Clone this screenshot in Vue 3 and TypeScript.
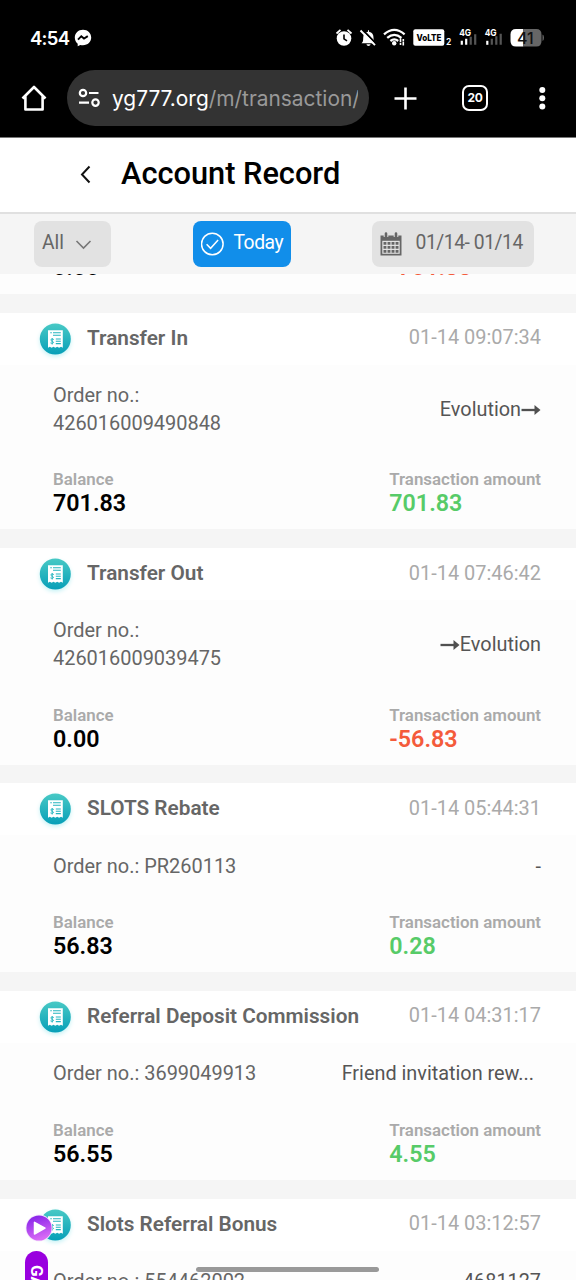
<script setup lang="ts">
interface AccountRecord {
  title: string
  time: string
  order: string
  wrap?: boolean
  detail: string
  arrow?: 'before' | 'after'
  clipped?: boolean
  balance: string
  amount: string
}

const records: AccountRecord[] = [
  { title: 'Transfer In', time: '01-14 09:07:34', order: '426016009490848', wrap: true, detail: 'Evolution', arrow: 'after', balance: '701.83', amount: '701.83' },
  { title: 'Transfer Out', time: '01-14 07:46:42', order: '426016009039475', wrap: true, detail: 'Evolution', arrow: 'before', balance: '0.00', amount: '-56.83' },
  { title: 'SLOTS Rebate', time: '01-14 05:44:31', order: 'PR260113', detail: '-', balance: '56.83', amount: '0.28' },
  { title: 'Referral Deposit Commission', time: '01-14 04:31:17', order: '3699049913', detail: 'Friend invitation rew...', clipped: true, balance: '56.55', amount: '4.55' },
  { title: 'Slots Referral Bonus', time: '01-14 03:12:57', order: '554462002', detail: '4681127', balance: '52.00', amount: '1.20' },
]
</script>

<template>
  <div class="screen">
    <header class="chrome">
      <div class="status">
        <span class="clock">4:54</span>
        <svg class="messenger" width="18" height="18" viewBox="0 0 18 18">
          <path d="M9 .8C4.200.8.8 4.200.8 8.600c0 2.500 1.100 4.700 2.900 6.100v2.500l2.600-1.200c.9.200 1.700.3 2.700.3 4.800 0 8.200-3.300 8.200-7.700S13.800.8 9 .8Z" fill="#fff" />
          <path d="m4 10.600 3.300-3.400 2.700 2.300 3.800-2.400" fill="none" stroke="#000" stroke-width="1.900" />
        </svg>
        <svg class="st-icons" width="210" height="24" viewBox="334 26 210 24">
          <!-- alarm -->
          <circle cx="344" cy="38.500" r="7.300" fill="#fff" />
          <path d="M336.500 33.500l4-3.600M351.500 33.500l-4-3.600" stroke="#fff" stroke-width="1.800" />
          <path d="M344 34.500v4.300l3 2" fill="none" stroke="#000" stroke-width="1.600" />
          <!-- muted bell -->
          <path d="M361.500 43.300c1.500-1.200 1.700-2.600 1.700-5.300 0-4 1.700-6 4.800-6.300v-1.500h1v1.500c3.200.4 4.500 2.700 4.500 6 0 2.800.3 4 2 5.600Z M366.500 44.300h4c-.2 2.200-3.800 2.200-4 0Z" fill="#fff" />
          <path d="m362.300 29.500 15 15.500" stroke="#000" stroke-width="1.800" />
          <path d="m360.500 30.500 14.500 14.700" stroke="#fff" stroke-width="1.900" />
          <!-- wifi -->
          <g fill="none" stroke="#fff" stroke-width="2.300">
            <path d="M384 34.300q10.300-8.800 20.600 0" />
            <path d="M387.200 37.900q7.100-6 14.200 0" />
            <path d="M390.400 41q3.900-3.200 7.800 0" />
          </g>
          <circle cx="394.200" cy="43.300" r="2.200" fill="#fff" />
          <path d="M400.500 38.200v4M400.500 43v2M403.300 39v2M403.300 41.500v4" stroke="#fff" stroke-width="1.600" />
          <!-- VoLTE -->
          <rect x="413.300" y="29.300" width="31" height="16.500" rx="2" fill="#fff" />
          <text x="416.500" y="41" class="t-volte" textLength="25" lengthAdjust="spacingAndGlyphs">VoLTE</text>
          <text x="446" y="45" class="t-two">2</text>
          <!-- signals -->
          <text x="459.200" y="35.600" class="t-4g" textLength="12" lengthAdjust="spacingAndGlyphs">4G</text>
          <path d="M461.800 44.800v-4M466.200 44.800v-6" stroke="#fff" stroke-width="2.200" />
          <path d="M470.700 44.800v-8M475.200 44.800v-10.500" stroke="#555" stroke-width="2.200" />
          <text x="484.700" y="35.600" class="t-4g" textLength="12" lengthAdjust="spacingAndGlyphs">4G</text>
          <path d="M487.300 44.800v-4" stroke="#fff" stroke-width="2.200" />
          <path d="M491.800 44.800v-6M496.300 44.800v-8.500M500.700 44.800v-11" stroke="#555" stroke-width="2.200" />
          <!-- battery -->
          <path d="M516 29h7.300v17.500H516q-5.500 0-5.500-5.500v-6.500q0-5.500 5.500-5.500Z" fill="#fff" />
          <path d="M523.300 29h13q5.200 0 5.200 5.500V41q0 5.500-5.200 5.500h-13Z M542.500 34.500q1.500.5 1.500 3.200t-1.500 3.200Z" fill="#666" />
          <text x="517" y="43.600" class="t-bat">41</text>
        </svg>
      </div>
      <div class="toolbar">
        <svg class="home" width="28" height="28" viewBox="0 0 28 28">
          <path d="M2.500 14.500 14 3 25.500 14.500M5.400 12.500v13h17.200v-13" fill="none" stroke="#fff" stroke-width="2.600" stroke-linejoin="round" />
        </svg>
        <div class="address">
          <svg width="24" height="20" viewBox="0 0 24 20" fill="none" stroke="#fff" stroke-width="2.200">
            <circle cx="6" cy="5" r="3.200" /><path d="M12 5h9.500M2 14.600h10" /><circle cx="18.500" cy="14.600" r="3.200" />
          </svg>
          <span class="url">yg777.org<i>/m/transaction/</i></span>
        </div>
        <svg class="plus" width="24" height="24" viewBox="0 0 24 24"><path d="M12.500 1.500v22M1.500 12.500h22" stroke="#fff" stroke-width="2.600" /></svg>
        <span class="tabs">20</span>
        <svg class="dots" width="8" height="24" viewBox="0 0 8 24" fill="#fff"><circle cx="4.300" cy="3.900" r="3" /><circle cx="4.300" cy="12.300" r="3" /><circle cx="4.300" cy="20.600" r="3" /></svg>
      </div>
    </header>

    <div class="title-bar">
      <svg width="14" height="20" viewBox="0 0 14 20"><path d="M11.500 2.500 4 10.500l7.500 8" fill="none" stroke="#111" stroke-width="2" /></svg>
      <h1>Account Record</h1>
    </div>

    <div class="filters">
      <button class="pill all">
        <span>All</span>
        <svg width="18" height="12" viewBox="0 0 18 12"><path d="m1.500 3 7 7 7-7" fill="none" stroke="#777" stroke-width="1.600" /></svg>
      </button>
      <button class="pill today">
        <svg width="24" height="24" viewBox="0 0 24 24" fill="none" stroke="#fff" stroke-width="1.500"><circle cx="11.300" cy="12" r="10.800" /><path d="m5.600 12.300 4 4L17.100 8" /></svg>
        <span>Today</span>
      </button>
      <button class="pill range">
        <svg width="22" height="24" viewBox="0 0 22 24">
          <path d="M.5 3.500h21v20H.5Z" fill="#666" />
          <path d="M2.300 8.800h17.400v13H2.300Z" fill="#e2e2e2" />
          <path d="M3.500 11.300h15M3.500 15.300h15M3.500 19.300h15" stroke="#666" stroke-width="2.700" stroke-dasharray="2.900 1.130" />
          <path d="M6 0v5M16 0v5" stroke="#e2e2e2" stroke-width="4.600" /><path d="M6 1.500v4M16 1.500v4" stroke="#666" stroke-width="2.600" stroke-linecap="round" />
        </svg>
        <span>01/14- 01/14</span>
      </button>
    </div>

    <main class="list">
      <div class="card partial">
        <span class="value">0.00</span>
        <span class="value amt negative">-701.83</span>
      </div>
      <article v-for="r in records" :key="r.time" class="card">
        <div class="head">
          <svg class="receipt" width="40" height="44" viewBox="0 0 40 44">
            <defs><linearGradient id="teal" x1="0" y1="0" x2="0" y2="1"><stop offset="0" stop-color="#48c9c5" /><stop offset="1" stop-color="#079fb8" /></linearGradient></defs>
            <circle cx="20.300" cy="20" r="15.500" fill="url(#teal)" />
            <path d="M13 11.200h14.800v17.600l-1.800-1-1.900 1-1.900-1-1.900 1-1.800-1-1.900 1-1.800-1-1.800 1Z" fill="#fff" />
            <path d="M15.300 13.700h1.500M18 13.700h7.800M18 16.300h7.800M20.800 20h5M20.800 22.300h5M20.800 24.600h5" stroke="#25b5bf" stroke-width="1.100" />
            <path d="M18.800 20.500c-3-1.500-3.800 1-1.700 1.700 2.500.8 1.300 3-1.600 1.700M17.200 19v6.500" fill="none" stroke="#25b5bf" stroke-width="1" />
          </svg>
          <h2>{{ r.title }}</h2>
          <time>{{ r.time }}</time>
        </div>
        <div class="order">
          <p>Order no.:<br v-if="r.wrap">{{ r.wrap ? '' : ' ' }}{{ r.order }}</p>
          <div class="detail" :class="{ clipped: r.clipped }">
            <svg v-if="r.arrow" :class="r.arrow" width="20" height="12" viewBox="0 0 20 12"><path d="M.5 6H15" stroke="#505050" stroke-width="2.300" /><path d="m13.500 1 6 5-6 5Z" fill="#505050" /></svg>
            <span>{{ r.detail }}</span>
          </div>
        </div>
        <div class="totals">
          <div><span class="label">Balance</span><span class="value">{{ r.balance }}</span></div>
          <div class="amount"><span class="label">Transaction amount</span><span class="value" :class="r.amount.startsWith('-') ? 'negative' : 'positive'">{{ r.amount }}</span></div>
        </div>
      </article>
    </main>

    <svg class="play" width="28" height="28" viewBox="0 0 28 28">
      <defs><linearGradient id="violet" x1="0" y1="0" x2=".3" y2="1"><stop offset="0" stop-color="#7f1ce8" /><stop offset="1" stop-color="#d76af5" /></linearGradient></defs>
      <circle cx="14" cy="14" r="13.500" fill="#f6eafd" /><circle cx="14" cy="14" r="12.600" fill="url(#violet)" />
      <path d="M9.500 8.300v11.800l10.500-6Z" fill="#fff" stroke="#fff" stroke-width="1.500" stroke-linejoin="round" />
    </svg>
    <div class="games">GAMES</div>
    <div class="gesture"></div>
  </div>
</template>

<style>
body { margin: 0; }
</style>

<style scoped>
.screen { position: relative; width: 576px; height: 1280px; overflow: hidden; background: #f5f5f5; font-family: Roboto, "Liberation Sans", sans-serif; color: #666; display: flex; flex-direction: column; }
.screen * { box-sizing: border-box; }
h1, h2, p { margin: 0; }
svg { display: block; flex: none; }
.chrome { height: 138px; flex: none; background: #000; border-bottom: 1px solid #777; }
.status { height: 70px; padding: 5px 32px 0 30px; display: flex; align-items: center; color: #fff; }
.clock { font: 600 18.500px/24px Inter, sans-serif; letter-spacing: -.7px; width: 44px; white-space: nowrap; }
.st-icons { margin-left: auto; }
.t-volte { font: 800 9px Inter, sans-serif; fill: #000; }
.t-two { font: 600 8.500px Inter, sans-serif; fill: #fff; }
.t-4g { font: 700 9.500px Inter, sans-serif; fill: #fff; }
.t-bat { font: 500 16px Inter, sans-serif; fill: #111; }
.toolbar { height: 56px; display: flex; align-items: center; }
.home { margin-left: 20px; }
.address { width: 302px; height: 56px; margin-left: 19px; padding-left: 10px; border-radius: 28px; background: #333; display: flex; align-items: center; overflow: hidden; }
.url { width: 246px; margin: 2px 0 0 11px; overflow: hidden; white-space: nowrap; color: #fff; font: 400 20.900px/32px Inter, sans-serif; }
.url i { font-style: normal; color: #999; }
.plus { margin-left: 24px; }
.tabs { width: 26px; height: 26px; margin-left: 45px; border: 2.500px solid #fff; border-radius: 7px; color: #fff; font: 700 12px/22px Inter, sans-serif; letter-spacing: -.4px; text-align: center; }
.dots { margin-left: 50px; }
.title-bar { height: 76px; flex: none; display: flex; align-items: center; padding: 0 0 2px 78px; background: #fff; border-bottom: 2px solid #e0e0e0; }
h1 { margin-left: 29px; font-size: 30.750px; line-height: 40px; font-weight: 500; color: #000; white-space: nowrap; }
.filters { height: 60px; flex: none; display: flex; padding: 7px 0 0 34px; background: #f5f5f5; }
.pill { height: 46px; border: 0; border-radius: 8px; padding: 0 8px; background: #e2e2e2; color: #666; display: flex; align-items: center; font: 400 19.300px/24px Roboto, sans-serif; letter-spacing: -.45px; white-space: nowrap; }
.all { width: 77px; letter-spacing: 0; }
.all svg { margin-left: 11px; }
.today { width: 98px; margin-left: 82px; background: #118eea; color: #fff; }
.today span { margin-left: 8.500px; }
.range { width: 162px; margin-left: 81px; }
.range span { margin-left: 13.500px; }
.pill span { position: relative; top: -1px; }
.list { flex: none; display: flex; flex-direction: column; gap: 18.700px; }
.card { background: #fdfdfd; }
.partial { height: 20.200px; overflow: hidden; display: flex; padding-left: 53px; }
.partial .value { margin-top: -20px; width: 337px; flex: none; }
.partial .amt { width: auto; }
.head { height: 52px; padding: 0 35px 0 35px; background: #fff; display: flex; align-items: center; }
.receipt { margin-top: 4px; filter: drop-shadow(0 2px 2px #c5f2f5); }
h2 { margin: -2px 0 0 12px; font-size: 20.750px; line-height: 28px; font-weight: 600; white-space: nowrap; }
time { margin: -3px 0 0 auto; font-size: 19.950px; color: #aaa; white-space: nowrap; }
.order { padding: 17.200px 35px 0 53px; display: flex; justify-content: space-between; align-items: center; font-size: 19.950px; line-height: 27.700px; }
.detail { display: flex; align-items: center; color: #555; white-space: nowrap; font-size: 19.850px; }
.detail .after { order: 2; }
.clipped { margin-right: 7px; }
.totals { display: flex; justify-content: space-between; padding: 31.900px 35px 13.100px 53px; }
.label, .value { display: block; }
.label { color: #aaa; font-weight: 600; font-size: 16.900px; line-height: 21px; white-space: nowrap; }
.value { color: #000; font-size: 23.300px; line-height: 26px; font-weight: 600; }
.positive { color: #57cb68; }
.negative { color: #f45b3b; }
.play { position: absolute; left: 25px; top: 1214px; }
.games { position: absolute; left: 25px; top: 1251px; width: 23px; height: 90px; border-radius: 12px; background: #9900df; color: #fff; writing-mode: vertical-rl; font: 700 17px/23px Roboto, sans-serif; padding-top: 14px; }
.gesture { position: absolute; left: 196px; top: 1267px; width: 183px; height: 5px; border-radius: 3px; background: #999; }
</style>
